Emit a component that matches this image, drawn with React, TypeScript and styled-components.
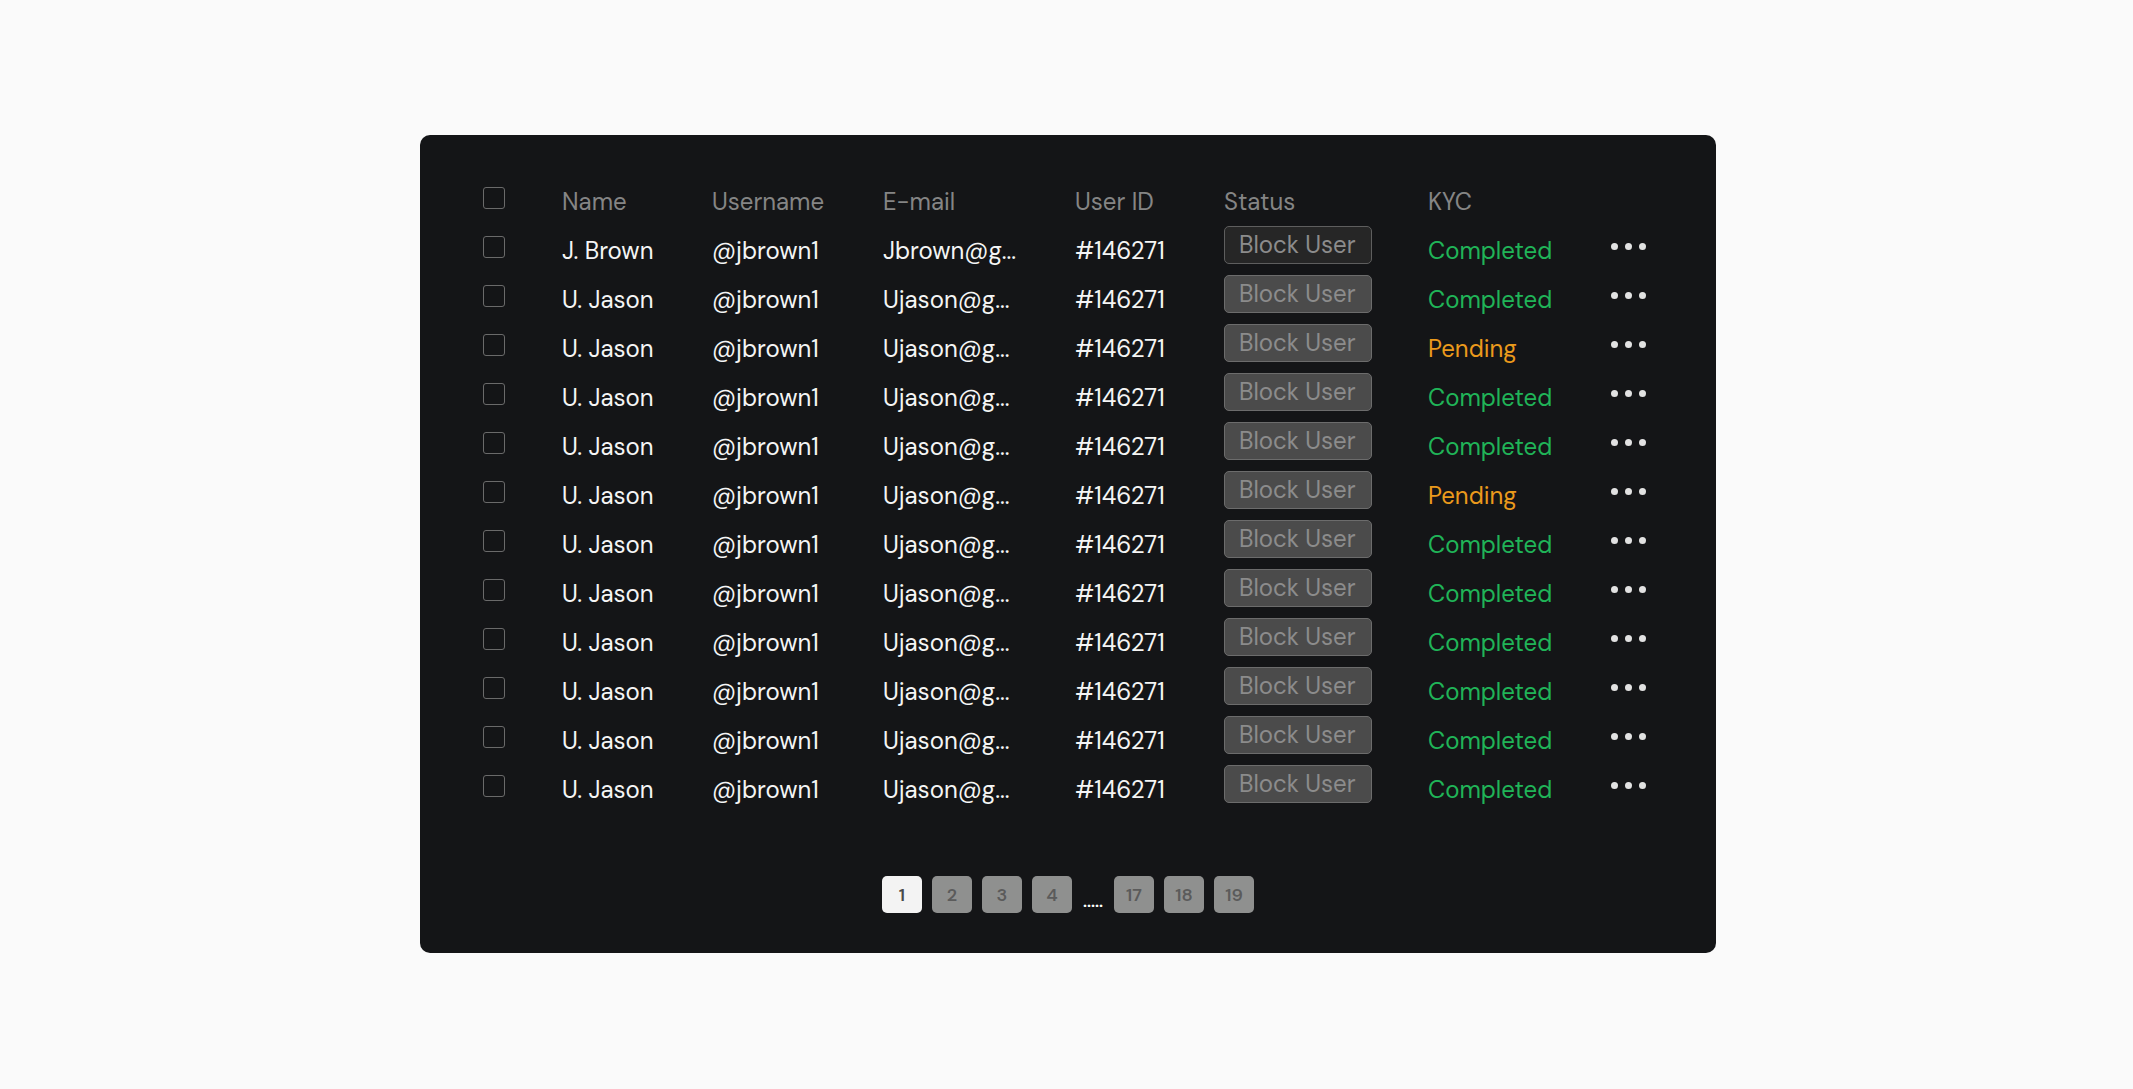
import React from "react";
import styled, { createGlobalStyle } from "styled-components";

const GlobalStyle = createGlobalStyle`
  html, body {
    margin: 0;
    padding: 0;
    background: #fafafa;
  }
  body {
    font-family: "DM Sans", Inter, "Liberation Sans", sans-serif;
  }
  * { box-sizing: border-box; }
`;

const Page = styled.div`
  width: 100%;
  min-height: 100vh;
  display: flex;
  justify-content: flex-start;
  align-items: flex-start;
  padding: 135px 0 0 420px;
`;

const Card = styled.section`
  width: 1296px;
  background: #141517;
  border-radius: 10px;
  padding: 38px 0 40px 63px;
  display: flex;
  flex-direction: column;
`;

const Table = styled.div`
  display: flex;
  flex-direction: column;
`;

const Row = styled.div`
  display: grid;
  grid-template-columns: 79px 150px 171px 192px 149px 204px 183px 60px;
  height: 49px;
  align-items: center;
`;

const Cell = styled.div<{ $head?: boolean; $tone?: "green" | "orange" }>`
  padding-top: 9px;
  font-size: 24px;
  line-height: 30px;
  white-space: nowrap;
  color: ${(p) =>
    p.$head
      ? "#858585"
      : p.$tone === "green"
      ? "#20b458"
      : p.$tone === "orange"
      ? "#eb9a1c"
      : "#f5f5f5"};
`;

const Check = styled.span`
  display: block;
  width: 22px;
  height: 22px;
  border: 1.5px solid #6a6a6a;
  border-radius: 3px;
`;

const BlockButton = styled.button<{ $dark?: boolean }>`
  width: 148px;
  height: 38px;
  padding: 0 0 1px 14px;
  margin-top: -3px;
  text-align: left;
  border-radius: 5px;
  border: 1.5px solid ${(p) => (p.$dark ? "#5e5e5e" : "#6c6c6c")};
  background: ${(p) => (p.$dark ? "#262626" : "#4b4b4b")};
  color: #8c8c8c;
  font-family: inherit;
  font-size: 24px;
  line-height: 30px;
  cursor: pointer;
`;

const Dots = styled.div`
  display: flex;
  gap: 7px;
`;

const Dot = styled.span`
  width: 7px;
  height: 7px;
  border-radius: 50%;
  background: #e2e2e2;
`;

const Pager = styled.nav`
  margin-top: 66px;
  margin-left: -63px;
  display: flex;
  justify-content: center;
  gap: 10px;
`;

const PageBtn = styled.button<{ $active?: boolean }>`
  width: 40px;
  height: 37px;
  border: none;
  border-radius: 5px;
  background: ${(p) => (p.$active ? "#f3f3f3" : "#8f908f")};
  color: ${(p) => (p.$active ? "#4a4a4a" : "#5b5b5b")};
  font-family: inherit;
  font-size: 18px;
  font-weight: 600;
  padding: 0;
  cursor: pointer;
`;

const Ellipsis = styled.span`
  align-self: flex-end;
  color: #ffffff;
  font-size: 16px;
  font-weight: 700;
  line-height: 12px;
  padding: 0 1px 5px;
`;

type User = { name: string; email: string; kyc: "Completed" | "Pending" };

const users: User[] = [
  { name: "J. Brown", email: "Jbrown@g...", kyc: "Completed" },
  { name: "U. Jason", email: "Ujason@g...", kyc: "Completed" },
  { name: "U. Jason", email: "Ujason@g...", kyc: "Pending" },
  { name: "U. Jason", email: "Ujason@g...", kyc: "Completed" },
  { name: "U. Jason", email: "Ujason@g...", kyc: "Completed" },
  { name: "U. Jason", email: "Ujason@g...", kyc: "Pending" },
  { name: "U. Jason", email: "Ujason@g...", kyc: "Completed" },
  { name: "U. Jason", email: "Ujason@g...", kyc: "Completed" },
  { name: "U. Jason", email: "Ujason@g...", kyc: "Completed" },
  { name: "U. Jason", email: "Ujason@g...", kyc: "Completed" },
  { name: "U. Jason", email: "Ujason@g...", kyc: "Completed" },
  { name: "U. Jason", email: "Ujason@g...", kyc: "Completed" },
];

export default function App() {
  return (
    <>
      <GlobalStyle />
      <Page>
        <Card>
          <Table>
            <Row>
              <Check />
              <Cell $head>Name</Cell>
              <Cell $head>Username</Cell>
              <Cell $head>E-mail</Cell>
              <Cell $head>User ID</Cell>
              <Cell $head>Status</Cell>
              <Cell $head>KYC</Cell>
              <span />
            </Row>
            {users.map((u, i) => (
              <Row key={i}>
                <Check />
                <Cell>{u.name}</Cell>
                <Cell>@jbrown1</Cell>
                <Cell>{u.email}</Cell>
                <Cell>#146271</Cell>
                <div>
                  <BlockButton $dark={i === 0}>Block User</BlockButton>
                </div>
                <Cell $tone={u.kyc === "Completed" ? "green" : "orange"}>{u.kyc}</Cell>
                <Dots>
                  <Dot />
                  <Dot />
                  <Dot />
                </Dots>
              </Row>
            ))}
          </Table>
          <Pager>
            <PageBtn $active>1</PageBtn>
            <PageBtn>2</PageBtn>
            <PageBtn>3</PageBtn>
            <PageBtn>4</PageBtn>
            <Ellipsis>.....</Ellipsis>
            <PageBtn>17</PageBtn>
            <PageBtn>18</PageBtn>
            <PageBtn>19</PageBtn>
          </Pager>
        </Card>
      </Page>
    </>
  );
}
